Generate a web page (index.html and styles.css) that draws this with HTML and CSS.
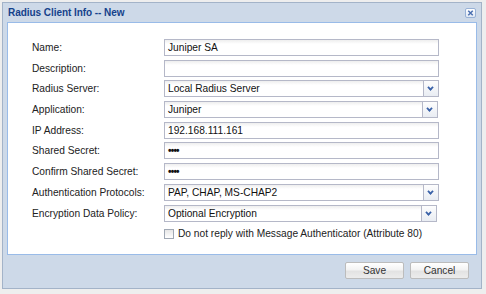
FILE: index.html
```html
<!DOCTYPE html>
<html lang="en">
<head>
    <meta charset="UTF-8">
    <title>Radius Client Info -- New</title>
    <link rel="stylesheet" href="styles.css">
</head>
<body>
    <div class="window">
        <div class="header">
            <span class="title">Radius Client Info -- New</span>
            <span class="close">
                <svg width="10" height="10" viewBox="0 0 10 10">
                    <path d="M2.5 2.5 L7.5 7.5 M7.5 2.5 L2.5 7.5" stroke="#4a6fb0" stroke-width="1.6" fill="none"/>
                </svg>
            </span>
        </div>
        <div class="body">
            <div class="form">
                <div class="row">
                    <span class="label">Name:</span>
                    <div class="text">Juniper SA</div>
                </div>
                <div class="row">
                    <span class="label">Description:</span>
                    <div class="text"></div>
                </div>
                <div class="row">
                    <span class="label">Radius Server:</span>
                    <div class="text combo"><span class="value">Local Radius Server</span><span class="trigger"></span></div>
                </div>
                <div class="row">
                    <span class="label">Application:</span>
                    <div class="text combo narrow"><span class="value">Juniper</span><span class="trigger"></span></div>
                </div>
                <div class="row">
                    <span class="label">IP Address:</span>
                    <div class="text">192.168.111.161</div>
                </div>
                <div class="row">
                    <span class="label">Shared Secret:</span>
                    <div class="text dots">&bull;&bull;&bull;&bull;</div>
                </div>
                <div class="row">
                    <span class="label">Confirm Shared Secret:</span>
                    <div class="text dots">&bull;&bull;&bull;&bull;</div>
                </div>
                <div class="row">
                    <span class="label">Authentication Protocols:</span>
                    <div class="text combo"><span class="value">PAP, CHAP, MS-CHAP2</span><span class="trigger"></span></div>
                </div>
                <div class="row">
                    <span class="label">Encryption Data Policy:</span>
                    <div class="text combo narrower"><span class="value">Optional Encryption</span><span class="trigger"></span></div>
                </div>
                <div class="row">
                    <span class="label"></span>
                    <div class="check"><span class="box"></span>Do not reply with Message Authenticator (Attribute 80)</div>
                </div>
            </div>
        </div>
        <div class="footer">
            <button class="btn">Save</button>
            <button class="btn">Cancel</button>
        </div>
    </div>
</body>
</html>
```

FILE: styles.css
```css
body {
    margin: 0;
    background: #eeeeee;
    font-family: "Liberation Sans", Arial, sans-serif;
    font-size: 10.2px;
    color: #222;
}
.window {
    box-sizing: border-box;
    margin: 2px 0 0 2px;
    width: 480px;
    height: 287px;
    border: 1px solid #a3b3c8;
    background: #cdd9e8;
    display: flex;
    flex-direction: column;
}
.header {
    height: 19px;
    display: flex;
    align-items: center;
    justify-content: space-between;
    padding: 0 5px;
}
.title {
    font-weight: bold;
    color: #15428b;
    font-size: 10px;
    letter-spacing: -0.05px;
}
.close {
    box-sizing: border-box;
    width: 11px;
    height: 10px;
    border: 1px solid #99b2d6;
    border-radius: 2px;
    background: linear-gradient(#ffffff, #dfe8f4);
    display: flex;
    align-items: center;
    justify-content: center;
}
.body {
    box-sizing: border-box;
    margin: 0 4px;
    height: 233px;
    border: 1px solid #99bbe8;
    background: #fff;
}
.form {
    padding: 16px 0 0 24px;
    display: flex;
    flex-direction: column;
    gap: 3.7px;
}
.row {
    display: flex;
    align-items: center;
    height: 17px;
}
.label {
    width: 132px;
    flex: none;
}
.text {
    box-sizing: border-box;
    width: 275px;
    height: 17px;
    border: 1px solid #b5b8c8;
    background: linear-gradient(#eeeeee, #ffffff 4px);
    padding: 0 3px;
    line-height: 15px;
    display: flex;
    align-items: center;
    color: #111;
}
.dots {
    font-size: 10px;
    font-weight: bold;
    letter-spacing: -0.8px;
}
.combo {
    padding-right: 0;
}
.narrow {
    width: 274px;
}
.narrower {
    width: 273px;
}
.value {
    flex: 1;
}
.trigger {
    box-sizing: border-box;
    width: 15px;
    height: 15px;
    border-left: 1px solid #b5b8c8;
    background: linear-gradient(#fdfdfd, #e9edf3);
    position: relative;
}
.trigger::after {
    content: "";
    position: absolute;
    left: 4px;
    top: 4px;
    width: 3px;
    height: 3px;
    border-right: 2px solid #3a62a8;
    border-bottom: 2px solid #3a62a8;
    transform: rotate(45deg) scale(0.9);
}
.check {
    display: flex;
    align-items: center;
    gap: 4px;
}
.box {
    box-sizing: border-box;
    width: 10px;
    height: 10px;
    border: 1px solid #a0a8b4;
    background: linear-gradient(#e6e6e6, #ffffff);
}
.footer {
    flex: 1;
    display: flex;
    justify-content: flex-end;
    align-items: flex-start;
    gap: 6px;
    padding: 7px 12px 0 0;
}
.btn {
    box-sizing: border-box;
    width: 59px;
    height: 17px;
    border: 1px solid #bcbcbc;
    border-radius: 2px;
    background: linear-gradient(#ffffff, #f3f3f3 45%, #e3e3e3 55%, #ececec);
    font-family: "Liberation Sans", Arial, sans-serif;
    font-size: 10.2px;
    color: #333;
    padding: 0;
}
```
